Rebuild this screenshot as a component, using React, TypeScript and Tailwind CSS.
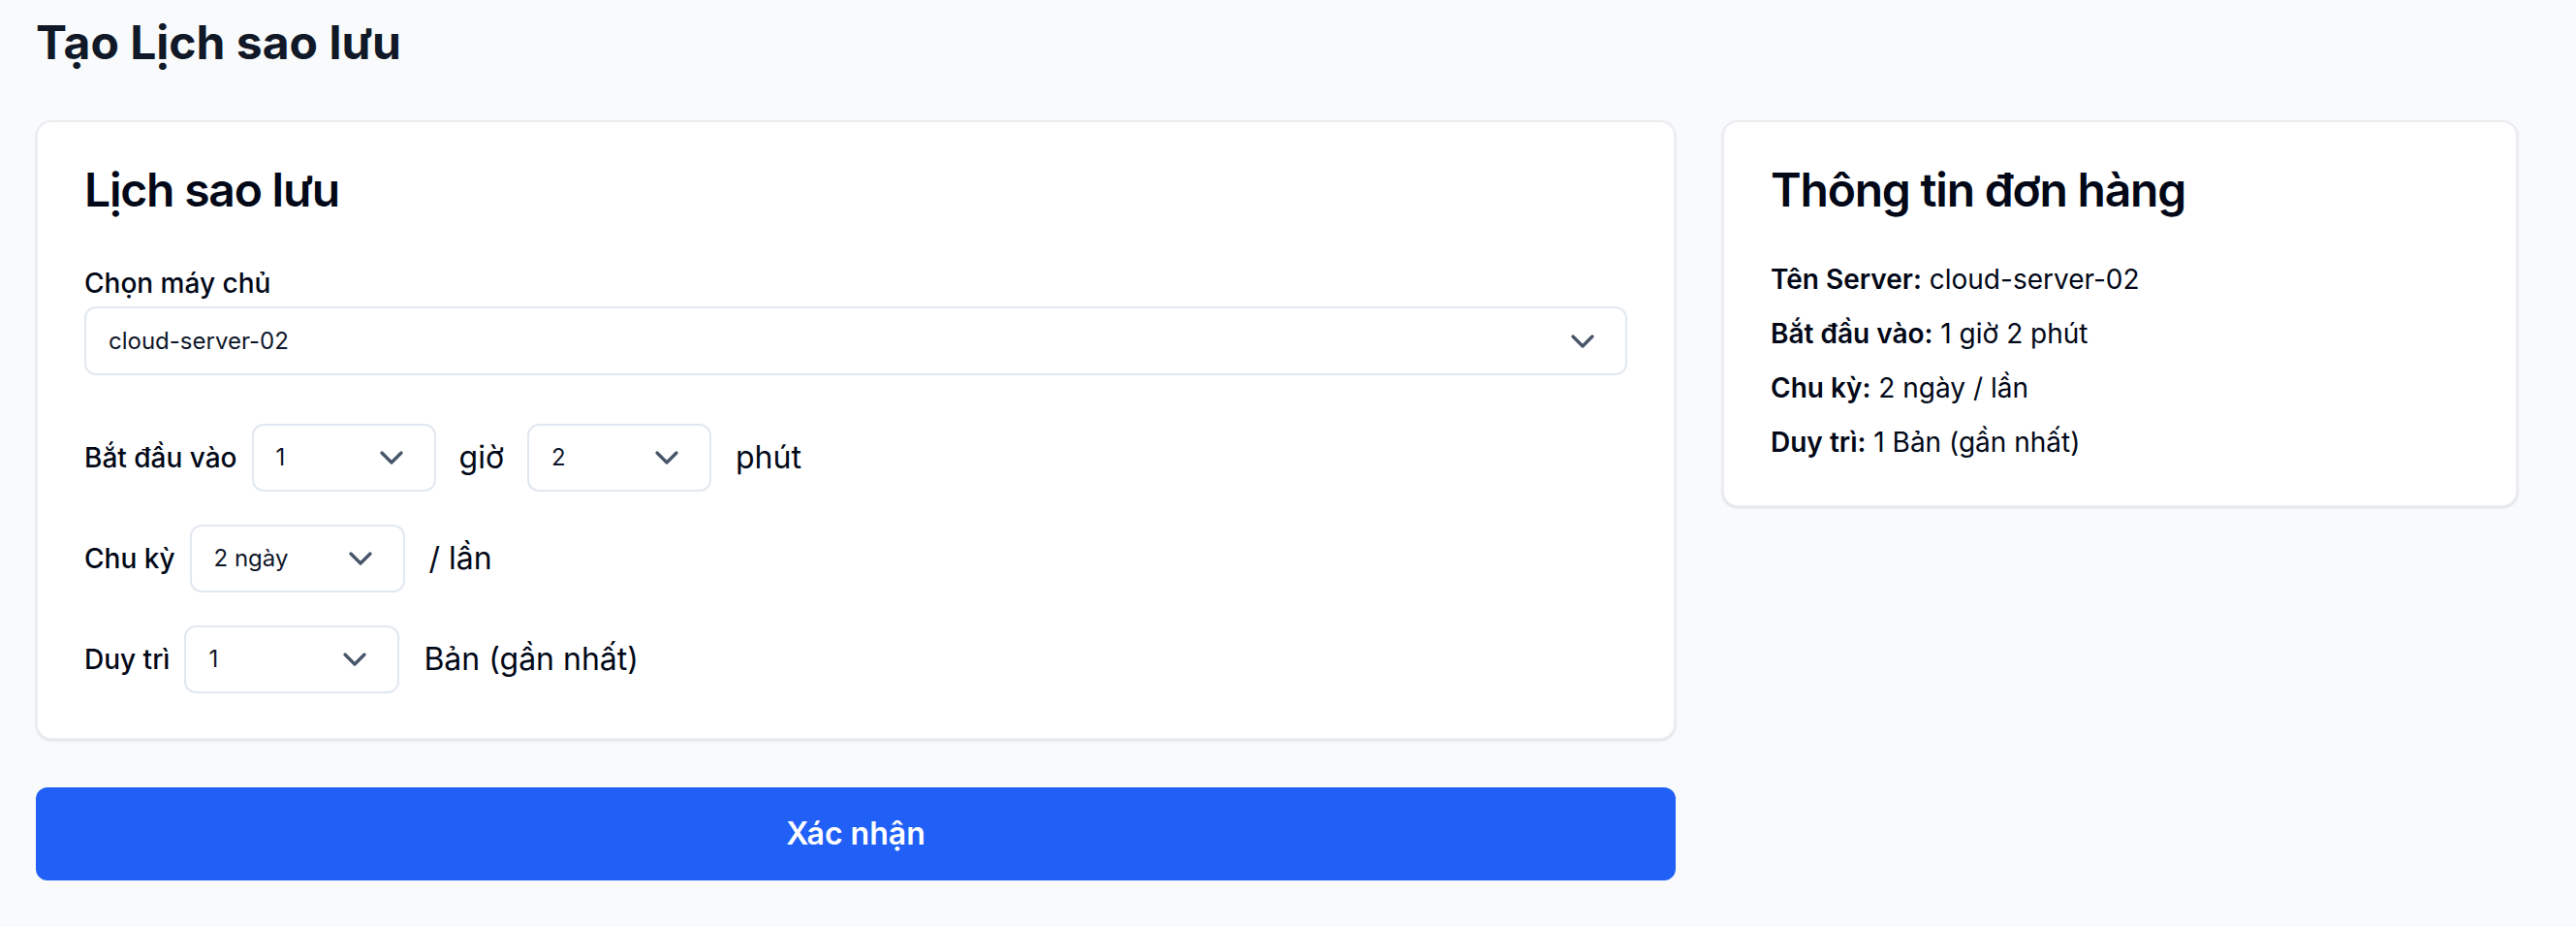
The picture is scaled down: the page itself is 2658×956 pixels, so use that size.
import React from 'react';
import { ChevronDown } from 'lucide-react';

type FakeSelectProps = { value: string; className?: string };

const FakeSelect: React.FC<FakeSelectProps> = ({ value, className = '' }) => (
    <div
        className={`flex items-center justify-between rounded-[12px] border-2 border-[#e2e8f0] bg-white pl-[23px] pr-[24px] text-[24px] text-[#0f172a] ${className}`}
    >
        <span>{value}</span>
        <ChevronDown size={40} strokeWidth={2} className="text-[#475569]" />
    </div>
);

const summary = [
    { label: 'Tên Server:', value: 'cloud-server-02' },
    { label: 'Bắt đầu vào:', value: '1 giờ 2 phút' },
    { label: 'Chu kỳ:', value: '2 ngày / lần' },
    { label: 'Duy trì:', value: '1 Bản (gần nhất)' },
];

export default function App() {
    return (
        <div className="min-h-screen bg-[#f8fafc] pl-[37px] pt-[12px] font-['Inter',sans-serif] text-[#020817]">
            <h1 className="text-[48px] leading-[64px] font-bold text-[#111827]">Tạo Lịch sao lưu</h1>

            <div className="mt-[48px] flex items-start gap-[48px]">
                <div className="flex w-[1692px] flex-col gap-[49px]">
                    <div className="rounded-[16px] border-2 border-[#eaecf0] bg-white px-[48px] pt-[46px] pb-[46px] shadow-sm">
                        <h2 className="text-[48px] leading-[48px] font-semibold tracking-tight">Lịch sao lưu</h2>

                        <div className="mt-[58px]">
                            <label className="block text-[28px] leading-[28px] font-medium">Chọn máy chủ</label>
                            <FakeSelect value="cloud-server-02" className="mt-[10px] h-[71px] w-full" />
                        </div>

                        <div className="mt-[50px] flex flex-col gap-[34px]">
                            <div className="flex h-[70px] items-center">
                                <span className="mr-[15px] text-[28px] font-medium">Bắt đầu vào</span>
                                <FakeSelect value="1" className="h-[70px] w-[190px]" />
                                <span className="ml-[24px] text-[32px]">giờ</span>
                                <FakeSelect value="2" className="ml-[24px] h-[70px] w-[190px]" />
                                <span className="ml-[25px] text-[32px]">phút</span>
                            </div>
                            <div className="flex h-[70px] items-center">
                                <span className="mr-[15px] text-[28px] font-medium">Chu kỳ</span>
                                <FakeSelect value="2 ngày" className="h-[70px] w-[222px]" />
                                <span className="ml-[25px] text-[32px]">/ lần</span>
                            </div>
                            <div className="flex h-[70px] items-center">
                                <span className="mr-[15px] text-[28px] font-medium">Duy trì</span>
                                <FakeSelect value="1" className="h-[70px] w-[222px]" />
                                <span className="ml-[25px] text-[32px]">Bản (gần nhất)</span>
                            </div>
                        </div>
                    </div>

                    <button className="h-[96px] w-full rounded-[12px] bg-[#2160f6] text-[32px] font-semibold text-white">
                        Xác nhận
                    </button>
                </div>

                <div className="w-[821px] rounded-[16px] border-2 border-[#eaecf0] bg-white px-[48px] pt-[46px] pb-[45px] shadow-sm">
                    <h2 className="text-[48px] leading-[48px] font-semibold tracking-tight">Thông tin đơn hàng</h2>
                    <div className="mt-[48px] flex flex-col gap-[16px]">
                        {summary.map((row) => (
                            <p key={row.label} className="text-[28px] leading-[40px]">
                                <span className="font-semibold">{row.label}</span> {row.value}
                            </p>
                        ))}
                    </div>
                </div>
            </div>
        </div>
    );
}
